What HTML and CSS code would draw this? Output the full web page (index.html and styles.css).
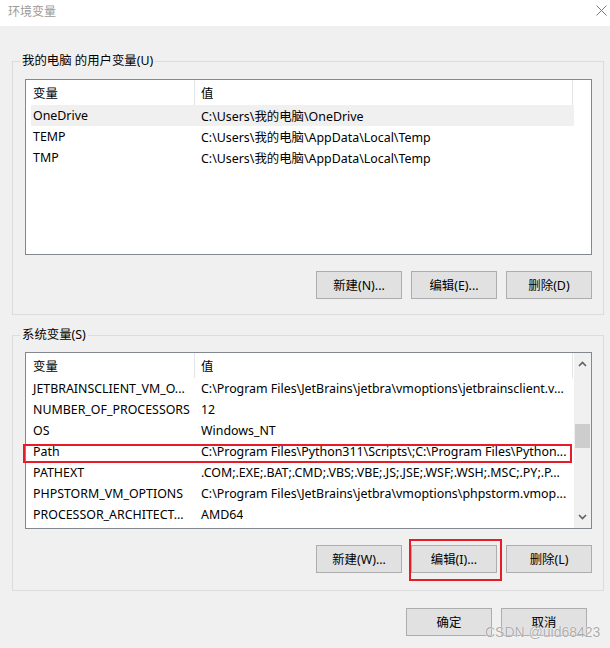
FILE: index.html
```html
<!DOCTYPE html>
<html lang="zh-CN">
<head>
<meta charset="utf-8">
<title>环境变量</title>
<link rel="stylesheet" href="styles.css">
</head>
<body>
<div class="window">
  <div class="titlebar">
    <span class="title">环境变量</span>
    <svg class="close" width="11" height="11" viewBox="0 0 11 11"><path d="M0.5 0.5L10.5 10.5M10.5 0.5L0.5 10.5" stroke="#7a7a7a" stroke-width="1" fill="none"/></svg>
  </div>
  <div class="main">
    <fieldset class="group group-user">
      <legend>我的电脑 的用户变量(U)</legend>
      <div class="listbox">
        <div class="cols">
          <div class="row head"><span class="c1">变量</span><span class="c2">值</span></div>
          <div class="row sel"><span class="c1">OneDrive</span><span class="c2">C:\Users\我的电脑\OneDrive</span></div>
          <div class="row"><span class="c1">TEMP</span><span class="c2">C:\Users\我的电脑\AppData\Local\Temp</span></div>
          <div class="row"><span class="c1">TMP</span><span class="c2">C:\Users\我的电脑\AppData\Local\Temp</span></div>
        </div>
      </div>
      <div class="btnrow">
        <button class="btn">新建(N)...</button>
        <button class="btn">编辑(E)...</button>
        <button class="btn">删除(D)</button>
      </div>
    </fieldset>
    <fieldset class="group group-sys">
      <legend>系统变量(S)</legend>
      <div class="listbox">
        <div class="cols">
          <div class="row head"><span class="c1">变量</span><span class="c2">值</span></div>
          <div class="row"><span class="c1">JETBRAINSCLIENT_VM_O...</span><span class="c2">C:\Program Files\JetBrains\jetbra\vmoptions\jetbrainsclient.v...</span></div>
          <div class="row"><span class="c1">NUMBER_OF_PROCESSORS</span><span class="c2">12</span></div>
          <div class="row"><span class="c1">OS</span><span class="c2">Windows_NT</span></div>
          <div class="row mark"><span class="c1">Path</span><span class="c2">C:\Program Files\Python311\Scripts\;C:\Program Files\Python...</span><span class="redbox"></span></div>
          <div class="row"><span class="c1">PATHEXT</span><span class="c2">.COM;.EXE;.BAT;.CMD;.VBS;.VBE;.JS;.JSE;.WSF;.WSH;.MSC;.PY;.P...</span></div>
          <div class="row"><span class="c1">PHPSTORM_VM_OPTIONS</span><span class="c2">C:\Program Files\JetBrains\jetbra\vmoptions\phpstorm.vmop...</span></div>
          <div class="row"><span class="c1">PROCESSOR_ARCHITECT...</span><span class="c2">AMD64</span></div>
        </div>
        <div class="scrollbar">
          <div class="arrow"><svg width="9" height="6" viewBox="0 0 9 6"><path d="M1 5L4.5 1.5L8 5" stroke="#606060" stroke-width="1.6" fill="none"/></svg></div>
          <div class="track"><div class="thumb"></div></div>
          <div class="arrow"><svg width="9" height="6" viewBox="0 0 9 6"><path d="M1 1L4.5 4.5L8 1" stroke="#606060" stroke-width="1.6" fill="none"/></svg></div>
        </div>
      </div>
      <div class="btnrow">
        <button class="btn">新建(W)...</button>
        <span class="marked"><button class="btn">编辑(I)...</button><span class="redbox2"></span></span>
        <button class="btn">删除(L)</button>
      </div>
    </fieldset>
    <div class="footer">
      <button class="btn">确定</button>
      <button class="btn">取消</button>
    </div>
  </div>
  <div class="watermark">CSDN @uid68423</div>
</div>
</body>
</html>
```
FILE: styles.css
```css
html, body {
  margin: 0;
  padding: 0;
}
body {
  background: #f0f0f0;
  font-family: "Noto Sans", "Noto Sans CJK SC", sans-serif;
  font-size: 12px;
  color: #000;
}
.window {
  position: relative;
  width: 610px;
  height: 648px;
  overflow: hidden;
  background: #f0f0f0;
}
.titlebar {
  height: 26px;
  background: #fff;
  display: flex;
  align-items: flex-start;
  justify-content: space-between;
  padding: 0 3px 0 8px;
  box-sizing: border-box;
}
.title {
  color: #9a9a9a;
  font-size: 12px;
  line-height: 16px;
  margin-top: 3px;
  font-family: "Noto Sans CJK SC", sans-serif;
}
.close {
  margin-top: 5px;
}
.main {
  padding: 0 0 0 12px;
}
.group {
  width: 592px;
  box-sizing: border-box;
  margin: 0;
  border: 1px solid #dcdcdc;
  padding: 10px 11px 15px 12px;
  min-width: 0;
}
.group-user {
  margin-top: 27px;
}
.group-sys {
  margin-top: 12px;
  padding-top: 9px;
  padding-bottom: 17px;
}
.group legend {
  padding: 0 2px;
  margin-left: -5px;
  line-height: 16px;
  font-size: 12.4px;
  font-family: "Noto Sans", "Noto Sans CJK SC", sans-serif;
}
.listbox {
  width: 567px;
  height: 176px;
  box-sizing: border-box;
  border: 1px solid #828790;
  background: #fff;
  padding-left: 5px;
  display: flex;
  font-size: 12.4px;
}
.group-sys .listbox {
  height: 177px;
}
.cols {
  width: 542px;
  display: flex;
  flex-direction: column;
}
.row {
  position: relative;
  display: flex;
  align-items: center;
  height: 21px;
  white-space: nowrap;
}
.row.head {
  height: 25px;
  border-right: 1px solid #e5e5e5;
}
.row.sel {
  background: #f0f0f0;
  width: 543px;
}
.c1 {
  width: 163px;
  padding-left: 2px;
  box-sizing: border-box;
  flex: none;
  overflow: hidden;
}
.c2 {
  padding-left: 7px;
  overflow: hidden;
}
.head .c2 {
  align-self: stretch;
  display: flex;
  align-items: center;
  border-left: 1px solid #e5e5e5;
  padding-left: 6px;
}
.redbox {
  position: absolute;
  left: -8px;
  top: 3px;
  width: 549px;
  height: 19px;
  border: 2px solid #e81c28;
  box-sizing: border-box;
}
.scrollbar {
  width: 17px;
  margin-left: 1px;
  background: #f0f0f0;
  display: flex;
  flex-direction: column;
}
.arrow {
  height: 22px;
  display: flex;
  align-items: center;
  justify-content: center;
}
.track {
  flex: 1;
}
.thumb {
  margin: 49px 1px 0 1px;
  height: 24px;
  background: #cdcdcd;
}
.btnrow {
  display: flex;
  justify-content: flex-end;
  gap: 9px;
  width: 567px;
  margin-top: 16px;
}
.btn {
  width: 86px;
  height: 28px;
  box-sizing: border-box;
  border: 1px solid #adadad;
  background: #e1e1e1;
  font-family: "Noto Sans", "Noto Sans CJK SC", sans-serif;
  font-size: 12.4px;
  color: #000;
  padding: 0;
  margin: 0;
}
.marked {
  position: relative;
  display: block;
}
.redbox2 {
  position: absolute;
  left: -2px;
  top: -6px;
  width: 93px;
  height: 42px;
  border: 2px solid #e81c28;
  box-sizing: border-box;
}
.footer {
  display: flex;
  justify-content: flex-end;
  gap: 9px;
  width: 575px;
  margin-top: 17px;
}
.watermark {
  position: absolute;
  left: 485px;
  top: 624px;
  font-family: "Liberation Sans", sans-serif;
  font-size: 14px;
  color: rgba(150, 150, 150, 0.8);
  text-shadow: 0 0 1px #fff, 0 0 1px #fff;
  white-space: nowrap;
}
```
